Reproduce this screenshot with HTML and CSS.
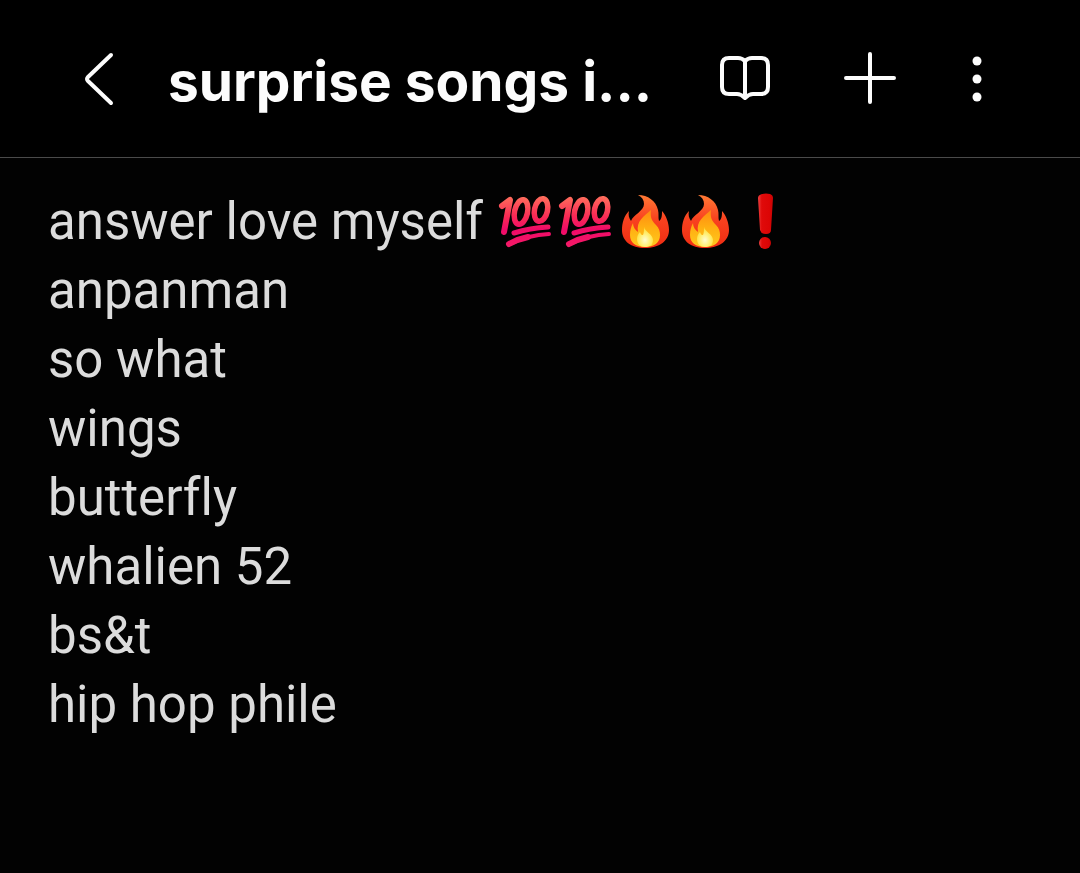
FILE: index.html
```html
<!DOCTYPE html>
<html lang="en">

<head>
    <meta charset="UTF-8">
    <meta name="viewport" content="width=device-width, initial-scale=1.0">
    <title>surprise songs</title>
    <link rel="stylesheet" href="styles.css">
</head>

<body>
    <header class="toolbar">
        <button class="icon-button" aria-label="Back">
            <svg width="64" height="64" viewBox="0 0 64 64">
                <path class="line" d="M44 8 L21 30 Q19 32 21 34 L44 56" />
            </svg>
        </button>
        <h1 class="note-title">surprise songs i...</h1>
        <div class="actions">
            <button class="icon-button" aria-label="Reading mode">
                <svg width="64" height="64" viewBox="0 0 64 64">
                    <path class="line" d="M32 14 Q29 11 25 11 H16 Q9 11 9 18 V40 Q9 47 16 47 H24 Q28 47 32 51 Q36 47 40 47 H48 Q55 47 55 40 V18 Q55 11 48 11 H39 Q35 11 32 14 V50" />
                </svg>
            </button>
            <button class="icon-button" aria-label="Add">
                <svg width="64" height="64" viewBox="0 0 64 64">
                    <path class="line" d="M32 7 V55 M8 31 H56" />
                </svg>
            </button>
            <button class="icon-button" aria-label="More options">
                <svg width="28" height="64" viewBox="0 0 28 64">
                    <circle cx="14" cy="14" r="4.500" />
                    <circle cx="14" cy="32" r="4.500" />
                    <circle cx="14" cy="50" r="4.500" />
                </svg>
            </button>
        </div>
    </header>

    <main class="note">
        <p class="note-line">answer love myself
            <span class="emojis">
                <svg class="emoji" viewBox="0 0 60 60" role="img" aria-label="hundred points"><use href="#hundred" /></svg>
                <svg class="emoji" viewBox="0 0 60 60" role="img" aria-label="hundred points"><use href="#hundred" /></svg>
                <svg class="emoji" viewBox="0 0 60 60" role="img" aria-label="fire"><use href="#fire" /></svg>
                <svg class="emoji" viewBox="0 0 60 60" role="img" aria-label="fire"><use href="#fire" /></svg>
                <svg class="emoji" viewBox="0 0 60 60" role="img" aria-label="exclamation mark"><use href="#exclamation" /></svg>
            </span>
        </p>
        <p class="note-line">anpanman</p>
        <p class="note-line">so what</p>
        <p class="note-line">wings</p>
        <p class="note-line">butterfly</p>
        <p class="note-line">whalien 52</p>
        <p class="note-line">bs&amp;t</p>
        <p class="note-line">hip hop phile</p>
    </main>

    <!-- emoji drawings used in the note -->
    <svg class="sprites" width="0" height="0" aria-hidden="true">
        <defs>
            <linearGradient id="pink" gradientUnits="userSpaceOnUse" x1="0" y1="4" x2="0" y2="56">
                <stop offset="0" stop-color="#ff6f5c" />
                <stop offset="0.400" stop-color="#f92a55" />
                <stop offset="0.650" stop-color="#f00a68" />
                <stop offset="1" stop-color="#f41c66" />
            </linearGradient>
            <linearGradient id="flame" x1="0" y1="0" x2="0" y2="1">
                <stop offset="0" stop-color="#ff7a35" />
                <stop offset="0.450" stop-color="#f9421f" />
                <stop offset="1" stop-color="#f02c12" />
            </linearGradient>
            <linearGradient id="flame-inner" x1="0" y1="0" x2="0" y2="1">
                <stop offset="0" stop-color="#ff8a10" />
                <stop offset="0.500" stop-color="#ffb012" />
                <stop offset="1" stop-color="#ffc81e" />
            </linearGradient>
            <radialGradient id="flame-core" cx="0.500" cy="0.650" r="0.600">
                <stop offset="0" stop-color="#fffbd0" />
                <stop offset="0.500" stop-color="#fff07a" />
                <stop offset="1" stop-color="#ffdc30" />
            </radialGradient>
            <linearGradient id="red" x1="0" y1="0" x2="1" y2="0">
                <stop offset="0" stop-color="#ee4040" />
                <stop offset="0.250" stop-color="#e00a0a" />
                <stop offset="0.750" stop-color="#dc0505" />
                <stop offset="1" stop-color="#c80505" />
            </linearGradient>
        </defs>
        <symbol id="hundred" viewBox="0 0 60 60">
            <g fill="none" stroke="url(#pink)" stroke-linecap="round" stroke-linejoin="round">
                <polyline stroke-width="6" points="6,14 14,8 8,40" />
                <ellipse stroke-width="5.500" cx="25" cy="20" rx="6.500" ry="12.500" transform="rotate(12 25 20)" />
                <ellipse stroke-width="5.500" cx="45" cy="18" rx="6.500" ry="11.500" transform="rotate(12 45 18)" />
                <path stroke-width="5" d="M18 41 Q34 36 52 35" />
                <path stroke-width="4" d="M14 52 Q32 43 53 42" />
                <path stroke-width="6" d="M13 52 Q22 47 32 45" />
            </g>
        </symbol>
        <symbol id="fire" viewBox="0 0 60 60">
            <path fill="url(#flame)" d="M22 3 C32 3 40 9 42 18 C43 22 42 25 43 29 C46 27 46 23 46 19 C50 23 53 31 53 38 C53 49 43 56 29 56 C15 56 6 49 6 38 C6 31 8 24 13 19 C12 23 13 26 15 29 C17 23 28 19 28 12 C28 8 26 5 22 3 Z" />
            <path fill="url(#flame-inner)" d="M35 18 C34 26 36 29 40 33 C43 36 44 39 44 43 C44 51 38 55 29 55 C20 55 14 51 14 43 C14 38 15 35 17 31 C17 35 19 38 22 40 C20 29 28 24 35 18 Z" />
            <path fill="url(#flame-core)" d="M28 35 C29 40 37 42 37 48 C37 53 34 55 29 55 C24 55 21 52 21 47 C21 44 22 42 24 40 C25 43 26 43 27 43 C28 41 28 38 28 35 Z" />
        </symbol>
        <symbol id="exclamation" viewBox="0 0 60 60">
            <path fill="url(#red)" d="M22 6 Q22 3 26 2 Q30 1 34 2 Q37 3 37 6 L35 38 Q35 42 30 42 Q25 42 24 38 Z" />
            <circle fill="url(#red)" cx="29" cy="51" r="6" />
        </symbol>
    </svg>
</body>

</html>
```
FILE: styles.css
```css
* {
    box-sizing: border-box;
}

body {
    margin: 0;
    min-height: 100vh;
    background-color: #020202;
    color: #dcdcdc;
    font-family: Roboto, "Liberation Sans", sans-serif;
}

.toolbar {
    display: flex;
    align-items: center;
    height: 158px;
    padding: 0 89px 0 67px;
    background-color: #000;
    border-bottom: 1px solid #4a4a4a;
}

.icon-button {
    display: block;
    padding: 0;
    border: 0;
    background: none;
    color: #fcfcfc;
    cursor: pointer;
}

.icon-button svg {
    display: block;
    fill: currentColor;
}

.icon-button .line {
    fill: none;
    stroke: currentColor;
    stroke-width: 4;
    stroke-linecap: round;
    stroke-linejoin: round;
}

.note-title {
    flex: 1;
    margin: 0;
    padding: 4px 0 0 37px;
    color: #fcfcfc;
    font-family: Inter, Roboto, sans-serif;
    font-size: 55px;
    font-weight: 700;
    white-space: nowrap;
}

.actions {
    display: flex;
    gap: 61px;
}

.note {
    padding: 29px 48px;
}

.note-line {
    display: flex;
    align-items: center;
    gap: 13px;
    margin: 0;
    font-size: 51px;
    line-height: 69px;
    font-variant-ligatures: none;
}

.emojis {
    display: flex;
}

.emoji {
    width: 60px;
    height: 60px;
}

.sprites {
    display: block;
}
```
